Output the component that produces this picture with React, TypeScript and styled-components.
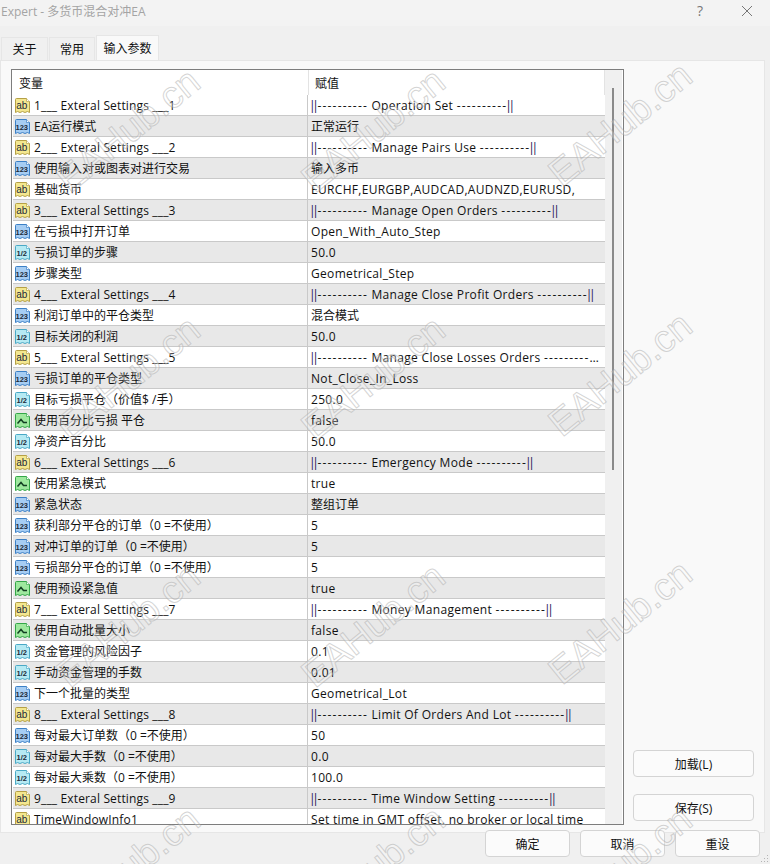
import React from "react";
import styled, { createGlobalStyle } from "styled-components";

const GlobalStyle = createGlobalStyle`
    html, body {
        margin: 0;
        padding: 0;
        background: #f0f0f0;
    }
    * {
        box-sizing: border-box;
    }
`;

const FONT = `"Open Sans", "Noto Sans CJK SC", sans-serif`;

type Kind = "ab" | "int" | "half" | "bool";

const sep = (label: string) => `||---------- ${label} ----------||`;
const ext = (n: number) => `${n}___ Exteral Settings ___${n}`;

const rows: [Kind, string, string][] = [
    ["ab", ext(1), sep("Operation Set")],
    ["int", "EA运行模式", "正常运行"],
    ["ab", ext(2), sep("Manage Pairs Use")],
    ["int", "使用输入对或图表对进行交易", "输入多币"],
    ["ab", "基础货币", "EURCHF,EURGBP,AUDCAD,AUDNZD,EURUSD,"],
    ["ab", ext(3), sep("Manage Open Orders")],
    ["int", "在亏损中打开订单", "Open_With_Auto_Step"],
    ["half", "亏损订单的步骤", "50.0"],
    ["int", "步骤类型", "Geometrical_Step"],
    ["ab", ext(4), sep("Manage Close Profit Orders")],
    ["int", "利润订单中的平仓类型", "混合模式"],
    ["half", "目标关闭的利润", "50.0"],
    ["ab", ext(5), sep("Manage Close Losses Orders")],
    ["int", "亏损订单的平仓类型", "Not_Close_In_Loss"],
    ["half", "目标亏损平仓（价值$ /手）", "250.0"],
    ["bool", "使用百分比亏损 平仓", "false"],
    ["half", "净资产百分比", "50.0"],
    ["ab", ext(6), sep("Emergency Mode")],
    ["bool", "使用紧急模式", "true"],
    ["int", "紧急状态", "整组订单"],
    ["int", "获利部分平仓的订单（0 =不使用）", "5"],
    ["int", "对冲订单的订单（0 =不使用）", "5"],
    ["int", "亏损部分平仓的订单（0 =不使用）", "5"],
    ["bool", "使用预设紧急值", "true"],
    ["ab", ext(7), sep("Money Management")],
    ["bool", "使用自动批量大小", "false"],
    ["half", "资金管理的风险因子", "0.1"],
    ["half", "手动资金管理的手数", "0.01"],
    ["int", "下一个批量的类型", "Geometrical_Lot"],
    ["ab", ext(8), sep("Limit Of Orders And Lot")],
    ["int", "每对最大订单数（0 =不使用）", "50"],
    ["half", "每对最大手数（0 =不使用）", "0.0"],
    ["half", "每对最大乘数（0 =不使用）", "100.0"],
    ["ab", ext(9), sep("Time Window Setting")],
    ["ab", "TimeWindowInfo1", "Set time in GMT offset, no broker or local time"]
];

const palette: Record<Kind, { fill: string; edge: string; label: string }> = {
    ab: { fill: "#f4e78f", edge: "#b5a046", label: "ab" },
    int: { fill: "#a6cdf3", edge: "#3c80c6", label: "123" },
    half: { fill: "#b6eaf3", edge: "#4aa9c6", label: "1/2" },
    bool: { fill: "#9ee89e", edge: "#34a648", label: "" }
};

const watermarks = [
    [128, 130], [373, 130], [620, 124],
    [128, 378], [373, 378], [620, 374],
    [128, 625], [373, 625], [620, 622],
    [128, 868], [373, 868], [620, 868]
];

const Page = styled.div`
    position: relative;
    width: 770px;
    height: 864px;
    overflow: hidden;
    background: #f0f0f0;
    font-family: ${FONT};
    font-size: 12px;
    color: #111;
`;

const TitleBar = styled.div`
    height: 26px;
    background: #f3f3f3;
    display: flex;
    align-items: center;
    padding: 0 17px 5px 1px;
    color: #a4a4a4;
    font-size: 12px;
`;

const TitleText = styled.span`
    flex: 1;
`;

const HelpMark = styled.span`
    width: 44px;
    font-size: 14px;
    color: #777;
`;

const TabStrip = styled.div`
    display: flex;
    align-items: flex-end;
    height: 34px;
    padding-left: 1px;
    gap: 1px;
`;

const Tab = styled.div<{ $active?: boolean; $width: number }>`
    width: ${(p) => p.$width}px;
    height: ${(p) => (p.$active ? 25 : 23)}px;
    display: flex;
    align-items: center;
    justify-content: center;
    background: ${(p) => (p.$active ? "#f9f9f9" : "#f0f0f0")};
    border: 1px solid #e6e6e6;
    border-bottom: none;
`;

const Panel = styled.div`
    width: 765px;
    height: 773px;
    background: #f9f9f9;
    border: 1px solid #e6e6e6;
    padding: 8px 10px 8px 10px;
    display: flex;
    gap: 9px;
`;

const ListBox = styled.div`
    width: 613px;
    height: 756px;
    border: 1px solid #7d7d7d;
    background: #fff;
    display: flex;
    overflow: hidden;
`;

const ListBody = styled.div`
    width: 593px;
    flex: none;
    padding-left: 1px;
`;

const HeaderRow = styled.div`
    display: flex;
    height: 25px;
    align-items: center;
`;

const HeaderCell = styled.div<{ $width: number }>`
    width: ${(p) => p.$width}px;
    height: 100%;
    display: flex;
    align-items: center;
    padding-left: 6px;
    border-right: 1px solid #e3e3e3;
`;

const Row = styled.div<{ $shaded: boolean }>`
    display: flex;
    height: 21px;
    background: ${(p) => (p.$shaded ? "#e8e8e8" : "#fff")};
    border-bottom: 1px solid #c9c9c9;
`;

const NameCell = styled.div`
    width: 295px;
    flex: none;
    display: flex;
    align-items: center;
    gap: 3px;
    padding-left: 1px;
    border-right: 1px solid #c9c9c9;
    white-space: nowrap;
`;

const ValueCell = styled.div`
    flex: 1;
    min-width: 0;
    line-height: 21px;
    padding: 0 6px 0 3px;
    white-space: nowrap;
    overflow: hidden;
    text-overflow: ellipsis;
`;

const Latin = styled.span<{ $spacing: number }>`
    letter-spacing: ${(p) => p.$spacing}px;
`;

const Bars = styled.span`
    letter-spacing: -3.4px;
    margin: 0 2px 0 -2px;
    color: #1a1050;
`;

const Dashes = styled.span`
    letter-spacing: 1.2px;
`;

const ScrollTrack = styled.div`
    width: 17px;
    flex: none;
    background: #f0f0f0;
    padding: 18px 0 0 7px;
`;

const ScrollThumb = styled.div`
    width: 2px;
    height: 382px;
    background: #8a8a8a;
`;

const SideColumn = styled.div`
    flex: 1;
    display: flex;
    flex-direction: column;
    justify-content: flex-end;
    align-items: flex-start;
    gap: 17px;
    padding-bottom: 3px;
`;

const Button = styled.button<{ $width: number }>`
    width: ${(p) => p.$width}px;
    height: 27px;
    padding: 0;
    background: #fbfbfb;
    border: 1px solid #d4d4d4;
    border-radius: 4px;
    font-family: ${FONT};
    font-size: 12px;
    color: #111;
`;

const Footer = styled.div`
    display: flex;
    justify-content: flex-end;
    gap: 10px;
    margin-top: -3px;
    padding-right: 10px;
    position: relative;
`;

const Watermark = styled.div<{ $x: number; $y: number }>`
    position: absolute;
    left: ${(p) => p.$x - 100}px;
    top: ${(p) => p.$y - 30}px;
    width: 200px;
    height: 60px;
    line-height: 60px;
    text-align: center;
    font-family: "Liberation Sans", sans-serif;
    font-size: 38px;
    color: rgba(255, 255, 255, 0.25);
    -webkit-text-stroke: 1px rgba(170, 170, 170, 0.5);
    transform: rotate(-39deg);
    pointer-events: none;
`;

const Grip = styled.svg`
    position: absolute;
    right: 1px;
    bottom: 1px;
`;

const TypeIcon: React.FC<{ kind: Kind }> = ({ kind }) => {
    const { fill, edge, label } = palette[kind];
    return (
        <svg width="17" height="17" viewBox="0 0 17 17">
            <path
                d="M1.5 2.5Q1.5 1.5 2.5 1.5H12.5L15.5 4.5V15.5L13.5 14.5L11 15.5L8.5 14.5L6 15.5L3.5 14.5L1.5 15.5Z"
                fill={fill}
                stroke={edge}
            />
            <path d="M12.5 1.5V4.5H15.5" fill="#fff" stroke={edge} strokeWidth="0.7" />
            {kind === "bool" ? (
                <path
                    d="M3.5 11.5L7 7.5L9.5 10.5H13"
                    fill="none"
                    stroke="#123f22"
                    strokeWidth="1.5"
                />
            ) : (
                <text
                    x="7.8"
                    y="11.5"
                    textAnchor="middle"
                    fontFamily='"Liberation Sans", sans-serif'
                    fontSize={kind === "ab" ? 10 : 7.5}
                    fontWeight={kind === "ab" ? 400 : 700}
                    fill="#1c2b3a"
                >
                    {label}
                </text>
            )}
        </svg>
    );
};

// ascii text is set a little wider than the font gives, cjk text is left alone
const CellText: React.FC<{ text: string; spacing: number }> = ({ text, spacing }) => {
    const parts = text.match(/^(\|\|)(-+)( .* )(-+)(\|\|)$/);
    if (parts) {
        return (
            <>
                <Bars>{parts[1]}</Bars>
                <Dashes>{parts[2]}</Dashes>
                <Latin $spacing={spacing}>{parts[3]}</Latin>
                <Dashes>{parts[4]}</Dashes>
                <Bars>{parts[5]}</Bars>
            </>
        );
    }
    return /^[\x20-\x7e]+$/.test(text) ? <Latin $spacing={spacing}>{text}</Latin> : <>{text}</>;
};

const App: React.FC = () => {
    return (
        <Page>
            <GlobalStyle />
            <TitleBar>
                <TitleText>Expert - 多货币混合对冲EA</TitleText>
                <HelpMark>?</HelpMark>
                <svg width="12" height="12" viewBox="0 0 12 12">
                    <path d="M1 1L11 11M11 1L1 11" stroke="#777" fill="none" />
                </svg>
            </TitleBar>
            <TabStrip>
                <Tab $width={47}>关于</Tab>
                <Tab $width={46}>常用</Tab>
                <Tab $width={63} $active>
                    输入参数
                </Tab>
            </TabStrip>
            <Panel>
                <ListBox>
                    <ListBody>
                        <HeaderRow>
                            <HeaderCell $width={296}>变量</HeaderCell>
                            <HeaderCell $width={296}>赋值</HeaderCell>
                        </HeaderRow>
                        {rows.map(([kind, name, value], index) => (
                            <Row key={`row-${index}`} $shaded={index % 2 === 1}>
                                <NameCell>
                                    <TypeIcon kind={kind} />
                                    <CellText text={name} spacing={0.15} />
                                </NameCell>
                                <ValueCell>
                                    <CellText text={value} spacing={0.32} />
                                </ValueCell>
                            </Row>
                        ))}
                    </ListBody>
                    <ScrollTrack>
                        <ScrollThumb />
                    </ScrollTrack>
                </ListBox>
                <SideColumn>
                    <Button $width={121}>加载(L)</Button>
                    <Button $width={121}>保存(S)</Button>
                </SideColumn>
            </Panel>
            <Footer>
                <Button $width={85}>确定</Button>
                <Button $width={85}>取消</Button>
                <Button $width={85}>重设</Button>
            </Footer>
            <Grip width="10" height="10" viewBox="0 0 10 10">
                <path d="M8 2h1v1H8zM5 5h1v1H5zM8 5h1v1H8zM2 8h1v1H2zM5 8h1v1H5zM8 8h1v1H8z" fill="#b5b5b5" />
            </Grip>
            {watermarks.map(([x, y]) => (
                <Watermark key={`${x}-${y}`} $x={x} $y={y}>
                    EAHub.cn
                </Watermark>
            ))}
        </Page>
    );
};

export default App;
